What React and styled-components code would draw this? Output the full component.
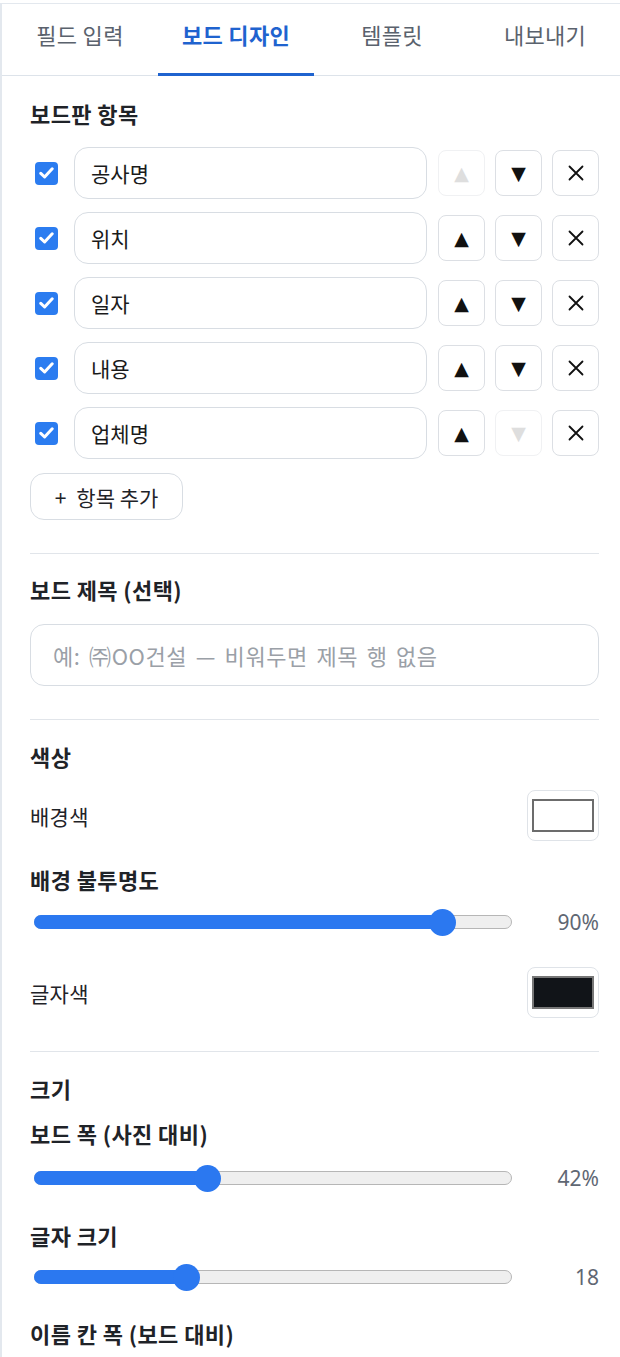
import React, { useState } from "react";
import styled, { createGlobalStyle } from "styled-components";

const GlobalStyle = createGlobalStyle`
  * { box-sizing: border-box; }
  body {
    margin: 0;
    background: #ffffff;
    font-family: "Noto Sans CJK KR", "Noto Sans", sans-serif;
    color: #1f2328;
  }
  #root { padding-top: 3px; }
`;

const Panel = styled.div`
  border-left: 2px solid #e3e8ee;
  border-top: 1px solid #e3e8ee;
  min-height: 1354px;
  overflow: hidden;
`;

const TabBar = styled.div`
  display: grid;
  grid-template-columns: repeat(3, 156px) 1fr;
  height: 72px;
  border-bottom: 1.5px solid #dde3ea;
`;

const Tab = styled.button`
  border: none;
  background: none;
  font-family: inherit;
  font-size: 22px;
  letter-spacing: 0.3px;
  font-weight: ${(p) => (p.$active ? 700 : 400)};
  color: ${(p) => (p.$active ? "#1f63cf" : "#5a626d")};
  border-bottom: 3px solid ${(p) => (p.$active ? "#1f63cf" : "transparent")};
  padding: 0 0 9px;
  margin-bottom: -1px;
  cursor: pointer;
`;

const Content = styled.div`
  padding: 23px 21px 0 26px;
`;

const Heading = styled.h3`
  margin: ${(p) => p.$top || 0}px 0 0;
  padding-left: 2px;
  font-size: 22px;
  letter-spacing: 0.4px;
  line-height: 28px;
  font-weight: 700;
  color: #1f2328;
`;

const ItemList = styled.div`
  display: flex;
  flex-direction: column;
  gap: 13px;
  margin-top: 20px;
`;

const ItemRow = styled.div`
  display: flex;
  align-items: center;
  height: 52px;
`;

const Check = styled.span`
  width: 23px;
  height: 23px;
  margin-left: 7px;
  margin-right: 16px;
  border-radius: 4px;
  background: #2b7cf0;
  display: flex;
  align-items: center;
  justify-content: center;
  flex-shrink: 0;
`;

const TextInput = styled.input`
  flex: 1;
  min-width: 0;
  height: ${(p) => p.$height || 52}px;
  border: 1.5px solid #d8dde3;
  border-radius: 14px;
  padding: 0 ${(p) => p.$pad || 16}px;
  font-family: inherit;
  font-size: ${(p) => p.$font || 21}px;
  letter-spacing: ${(p) => p.$spacing || 0}px;
  word-spacing: ${(p) => p.$spacing ? 3 : 0}px;
  color: #1a1a1a;
  outline: none;
  background: #fff;
  &::placeholder {
    color: #9aa0a7;
  }
`;

const Controls = styled.div`
  display: flex;
  gap: 10px;
  margin-left: 11px;
`;

const IconButton = styled.button`
  width: 47px;
  height: 46px;
  border-radius: 8px;
  border: 1.5px solid ${(p) => (p.disabled ? "#f0f1f3" : "#dcdfe4")};
  background: #fff;
  color: ${(p) => (p.disabled ? "#dedede" : "#111")};
  font-family: "DejaVu Sans", sans-serif;
  font-size: 19px;
  display: flex;
  align-items: center;
  justify-content: center;
  padding: 0;
`;

const AddButton = styled.button`
  margin: 14px 0 0 2px;
  width: 153px;
  height: 47px;
  border: 1.5px solid #d8dde3;
  border-radius: 14px;
  background: #fff;
  font-family: inherit;
  font-size: 21px;
  color: #1f2328;
  display: flex;
  align-items: center;
  justify-content: center;
  gap: 10px;
  padding: 0;
`;

const Divider = styled.hr`
  border: none;
  border-top: 1.5px solid #e1e5ea;
  margin: ${(p) => p.$top || 33}px 0 ${(p) => p.$bottom || 24}px 2px;
`;

const FieldBlock = styled.div`
  margin-top: ${(p) => p.$top || 0}px;
  padding-left: 2px;
  display: flex;
`;

const SwatchRow = styled.div`
  display: flex;
  align-items: center;
  justify-content: space-between;
  margin-top: ${(p) => p.$top || 0}px;
  padding-left: 2px;
`;

const Label = styled.span`
  font-size: 21px;
  letter-spacing: 0.3px;
  color: #1f2328;
`;

const Swatch = styled.div`
  width: 72px;
  height: 51px;
  border: 1.5px solid #dfe3e8;
  border-radius: 8px;
  padding: 8px 4px;
  background: #fff;
`;

const SwatchFill = styled.div`
  height: 100%;
  border: 2px solid ${(p) => (p.$dark ? "#777" : "#6c6c6c")};
  background: ${(p) => p.$color};
`;

const SliderRow = styled.div`
  display: flex;
  align-items: center;
  height: 28px;
  margin-top: ${(p) => p.$top || 15}px;
  padding-left: 6px;
`;

const Track = styled.div`
  position: relative;
  width: 478px;
  height: 14px;
  border-radius: 7px;
  border: 1px solid #b6b6b6;
  background: #efefef;
`;

const Fill = styled.div`
  position: absolute;
  left: -1px;
  top: -1px;
  bottom: -1px;
  border-radius: 7px;
  background: #2b78f0;
`;

const Thumb = styled.div`
  position: absolute;
  top: 50%;
  width: 27px;
  height: 27px;
  margin-left: -13.5px;
  margin-top: -13.5px;
  border-radius: 50%;
  background: #2b78f0;
`;

const Value = styled.span`
  flex: 1;
  text-align: right;
  font-family: "Noto Sans", sans-serif;
  font-size: 21px;
  color: #5f6773;
`;

const CheckIcon = () => (
  <svg width="15" height="12" viewBox="0 0 15 12">
    <path d="M1.8 6.4 L5.6 10 L13.2 1.8" fill="none" stroke="#fff" strokeWidth="3" strokeLinecap="round" strokeLinejoin="round" />
  </svg>
);

const CloseIcon = () => (
  <svg width="18" height="18" viewBox="0 0 18 18">
    <path d="M2.5 2.5 L15.5 15.5 M15.5 2.5 L2.5 15.5" stroke="#111" strokeWidth="1.8" strokeLinecap="round" />
  </svg>
);

const Slider = ({ value, min, max, top, label }) => {
  const p = (value - min) / (max - min);
  const pos = `calc(12.5px + ${p} * (100% - 25px))`;
  return (
    <SliderRow $top={top}>
      <Track>
        <Fill style={{ width: pos }} />
        <Thumb style={{ left: pos }} />
      </Track>
      <Value>{label}</Value>
    </SliderRow>
  );
};

const tabs = ["필드 입력", "보드 디자인", "템플릿", "내보내기"];
const items = ["공사명", "위치", "일자", "내용", "업체명"];

export default function App() {
  const [active, setActive] = useState(1);

  return (
    <>
      <GlobalStyle />
      <Panel>
        <TabBar>
          {tabs.map((t, i) => (
            <Tab key={t} $active={i === active} onClick={() => setActive(i)}>
              {t}
            </Tab>
          ))}
        </TabBar>

        <Content>
          <Heading>보드판 항목</Heading>
          <ItemList>
            {items.map((name, i) => (
              <ItemRow key={name}>
                <Check>
                  <CheckIcon />
                </Check>
                <TextInput defaultValue={name} />
                <Controls>
                  <IconButton disabled={i === 0}>▲</IconButton>
                  <IconButton disabled={i === items.length - 1}>▼</IconButton>
                  <IconButton>
                    <CloseIcon />
                  </IconButton>
                </Controls>
              </ItemRow>
            ))}
          </ItemList>
          <AddButton>
            <span>+</span>
            <span>항목 추가</span>
          </AddButton>

          <Divider $top={33} $bottom={21} />
          <Heading>보드 제목 (선택)</Heading>
          <FieldBlock $top={21}>
            <TextInput
              $height={62}
              $pad={22}
              $font={22}
              $spacing={0.6}
              placeholder="예: ㈜OO건설 — 비워두면 제목 행 없음"
            />
          </FieldBlock>

          <Divider $top={33} $bottom={22} />
          <Heading>색상</Heading>
          <SwatchRow $top={20}>
            <Label>배경색</Label>
            <Swatch>
              <SwatchFill $color="#ffffff" />
            </Swatch>
          </SwatchRow>
          <Heading $top={24}>배경 불투명도</Heading>
          <Slider value={90} min={20} max={100} top={15} label="90%" />
          <SwatchRow $top={31}>
            <Label>글자색</Label>
            <Swatch>
              <SwatchFill $dark $color="#111418" />
            </Swatch>
          </SwatchRow>

          <Divider $top={33} $bottom={22} />
          <Heading>크기</Heading>
          <Heading $top={17}>보드 폭 (사진 대비)</Heading>
          <Slider value={42} min={10} max={100} top={17} label="42%" />
          <Heading $top={29}>글자 크기</Heading>
          <Slider value={18} min={10} max={36} top={14} label="18" />
          <Heading $top={28}>이름 칸 폭 (보드 대비)</Heading>
        </Content>
      </Panel>
    </>
  );
}
